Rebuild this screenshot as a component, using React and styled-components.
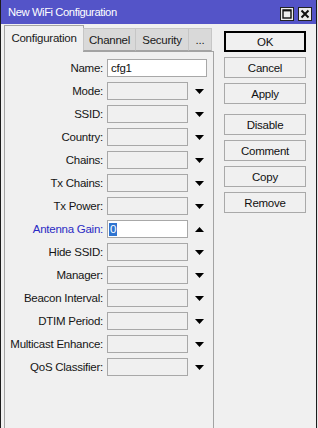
import React from 'react';
import styled, { createGlobalStyle } from 'styled-components';

const FONT = `"Liberation Sans", Arial, sans-serif`;

const Global = createGlobalStyle`
  html, body { margin: 0; padding: 0; background: #e6e6e6; }
  body { font-family: ${FONT}; font-size: 11.5px; letter-spacing: -0.25px; color: #111; }
`;

const Window = styled.div`
  width: 317px;
  height: 428px;
  box-sizing: border-box;
  border-left: 1px solid #1c1c1c;
  border-right: 1px solid #1c1c1c;
  background: #f0f0f0;
  display: flex;
  flex-direction: column;
  overflow: hidden;
`;

const TitleBar = styled.div`
  height: 24px;
  flex: none;
  background: #5454c8;
  color: #fff;
  display: flex;
  align-items: center;
  padding: 0 4px 0 7px;
  font-size: 11.2px;
  letter-spacing: -0.4px;
`;

const TitleText = styled.span`
  flex: 1;
  white-space: nowrap;
`;

const TitleButtons = styled.div`
  display: flex;
  gap: 4px;
  margin-top: 3px;
`;

const TitleButton = styled.div`
  width: 14px;
  height: 14px;
  box-sizing: border-box;
  border: 1px solid #222;
  background: #ececec;
  display: flex;
  align-items: center;
  justify-content: center;
`;

const Body = styled.div`
  flex: 1;
  min-height: 0;
  display: flex;
  gap: 10px;
  padding: 1px 10px 0 3px;
`;

const LeftCol = styled.div`
  width: 210px;
  display: flex;
  flex-direction: column;
`;

const TabStrip = styled.div`
  height: 26px;
  display: flex;
  align-items: flex-end;
  position: relative;
  z-index: 1;
`;

const Tab = styled.div`
  box-sizing: border-box;
  width: ${p => p.$w}px;
  height: ${p => (p.$active ? 27 : 23)}px;
  margin-bottom: ${p => (p.$active ? -1 : 0)}px;
  margin-left: ${p => (p.$first ? 0 : -1)}px;
  border: 1px solid ${p => (p.$active ? '#a3a3a3' : '#c6c6c6')};
  border-bottom: ${p => (p.$active ? 'none' : '1px solid #a3a3a3')};
  background: ${p => (p.$active ? '#f0f0f0' : '#d9d9d9')};
  display: flex;
  align-items: center;
  justify-content: center;
  padding-bottom: ${p => (p.$active ? 3 : 0)}px;
  white-space: nowrap;
  color: #1a1a1a;
`;

const Panel = styled.div`
  flex: 1;
  border: 1px solid #a3a3a3;
  border-bottom: none;
  background: #f0f0f0;
  padding-top: 7px;
  display: flex;
  flex-direction: column;
  gap: 5px;
`;

const Row = styled.div`
  height: 18px;
  display: flex;
  align-items: center;
`;

const Label = styled.div`
  width: 98px;
  text-align: right;
  white-space: nowrap;
  color: ${p => (p.$accent ? '#2b2bc4' : '#151515')};
`;

const Field = styled.div`
  margin-left: 4px;
  width: ${p => p.$w}px;
  height: 18px;
  box-sizing: border-box;
  border: 1px solid #a8a8a8;
  background: ${p => (p.$editable ? '#fff' : '#f0f0f0')};
  padding-left: ${p => (p.$sel ? 1 : 3)}px;
  display: flex;
  align-items: center;
  color: #111;
`;

const Selected = styled.span`
  background: #2f74d0;
  color: #fff;
  padding: 0 1px;
  line-height: 13px;
`;

const Arrow = styled.svg`
  margin-left: 7px;
  width: 9px;
  height: 5px;
`;

const ButtonCol = styled.div`
  width: 82px;
  padding-top: 6px;
  display: flex;
  flex-direction: column;
  gap: 5px;
`;

const Button = styled.div`
  height: 21px;
  box-sizing: border-box;
  border: 1px solid ${p => (p.$default ? '#000' : '#a9a9a9')};
  box-shadow: ${p => (p.$default ? 'inset 0 0 0 1px #000' : 'none')};
  background: #f0f0f0;
  display: flex;
  align-items: center;
  justify-content: center;
  margin-top: ${p => (p.$groupStart ? 5 : 0)}px;
  color: #111;
`;

const DownArrow = () => (
  <Arrow viewBox="0 0 9 5"><polygon points="0,0 9,0 4.5,5" fill="#000" /></Arrow>
);
const UpArrow = () => (
  <Arrow viewBox="0 0 9 5"><polygon points="0,5 9,5 4.5,0" fill="#000" /></Arrow>
);

const combos = [
  'Mode', 'SSID', 'Country', 'Chains', 'Tx Chains', 'Tx Power',
];
const combos2 = [
  'Hide SSID', 'Manager', 'Beacon Interval', 'DTIM Period', 'Multicast Enhance', 'QoS Classifier',
];

const tabs = [
  { name: 'Configuration', w: 80, active: true },
  { name: 'Channel', w: 53 },
  { name: 'Security', w: 54 },
  { name: '...', w: 24 },
];

const buttons = [
  { name: 'OK', def: true },
  { name: 'Cancel' },
  { name: 'Apply' },
  { name: 'Disable', group: true },
  { name: 'Comment' },
  { name: 'Copy' },
  { name: 'Remove' },
];

export default function App() {
  return (
    <>
      <Global />
      <Window>
        <TitleBar>
          <TitleText>New WiFi Configuration</TitleText>
          <TitleButtons>
            <TitleButton>
              <svg width="10" height="10" viewBox="0 0 10 10">
                <rect x="1" y="1" width="8" height="8" fill="none" stroke="#111" strokeWidth="1.4" />
                <line x1="1" y1="1.6" x2="9" y2="1.6" stroke="#111" strokeWidth="1.6" />
              </svg>
            </TitleButton>
            <TitleButton>
              <svg width="10" height="10" viewBox="0 0 10 10">
                <path d="M1.5 1.5 L8.5 8.5 M8.5 1.5 L1.5 8.5" stroke="#111" strokeWidth="2" />
              </svg>
            </TitleButton>
          </TitleButtons>
        </TitleBar>
        <Body>
          <LeftCol>
            <TabStrip>
              {tabs.map((t, i) => (
                <Tab key={t.name} $w={t.w} $active={t.active} $first={i === 0}>{t.name}</Tab>
              ))}
            </TabStrip>
            <Panel>
              <Row>
                <Label>Name:</Label>
                <Field $w={100} $editable>cfg1</Field>
              </Row>
              {combos.map(c => (
                <Row key={c}>
                  <Label>{c}:</Label>
                  <Field $w={81} />
                  <DownArrow />
                </Row>
              ))}
              <Row>
                <Label $accent>Antenna Gain:</Label>
                <Field $w={81} $editable $sel><Selected>0</Selected></Field>
                <UpArrow />
              </Row>
              {combos2.map(c => (
                <Row key={c}>
                  <Label>{c}:</Label>
                  <Field $w={81} />
                  <DownArrow />
                </Row>
              ))}
            </Panel>
          </LeftCol>
          <ButtonCol>
            {buttons.map(b => (
              <Button key={b.name} $default={b.def} $groupStart={b.group}>{b.name}</Button>
            ))}
          </ButtonCol>
        </Body>
      </Window>
    </>
  );
}
